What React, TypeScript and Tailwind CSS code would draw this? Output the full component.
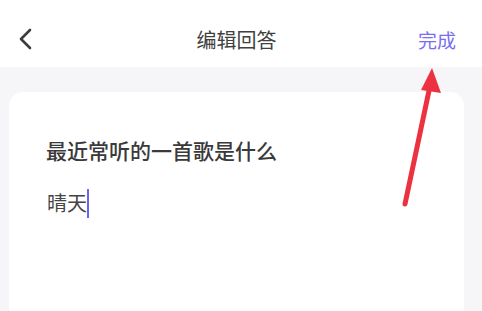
import React from "react";

export default function App() {
  return (
    <div
      className="relative w-[482px] h-[311px] overflow-hidden bg-[#f6f6f8]"
      style={{ fontFamily: '"Noto Sans CJK SC", "Noto Sans", sans-serif' }}
    >
      <div className="h-[67px] bg-white flex items-center pt-[13px] relative">
        <div className="absolute left-[17px] top-[27px]">
          <svg width="18" height="24" viewBox="0 0 18 24" fill="none">
            <path d="M13 3 L4 12 L13 21" stroke="#3c3c3c" strokeWidth="2.6" strokeLinecap="round" strokeLinejoin="round" />
          </svg>
        </div>
        <div className="flex-1 text-center text-[20px] leading-[26px] text-[#404040] pr-[9px]">编辑回答</div>
        <div className="absolute right-[26px] top-[27px] text-[19px] leading-[26px] text-[#7a6ef0]">完成</div>
      </div>
      <div className="ml-[9px] mr-[18px] mt-[25px] h-[260px] bg-white rounded-[14px] pt-[45px] px-[37px]">
        <div className="text-[21px] leading-[26px] font-medium text-[#3a3a3a]">最近常听的一首歌是什么</div>
        <div className="mt-[25px] h-[30px] flex items-center text-[20px] text-[#444] pl-[1px]">
          <span>晴天</span>
          <span className="inline-block w-[2px] h-[29px] bg-[#6f63ea]" />
        </div>
      </div>
      <svg className="absolute inset-0 pointer-events-none" width="482" height="311" viewBox="0 0 482 311">
        <line x1="405" y1="204" x2="430" y2="86" stroke="#ec3140" strokeWidth="5" strokeLinecap="round" />
        <polygon points="432,68 441,93 421,90" fill="#ec3140" />
      </svg>
    </div>
  );
}
